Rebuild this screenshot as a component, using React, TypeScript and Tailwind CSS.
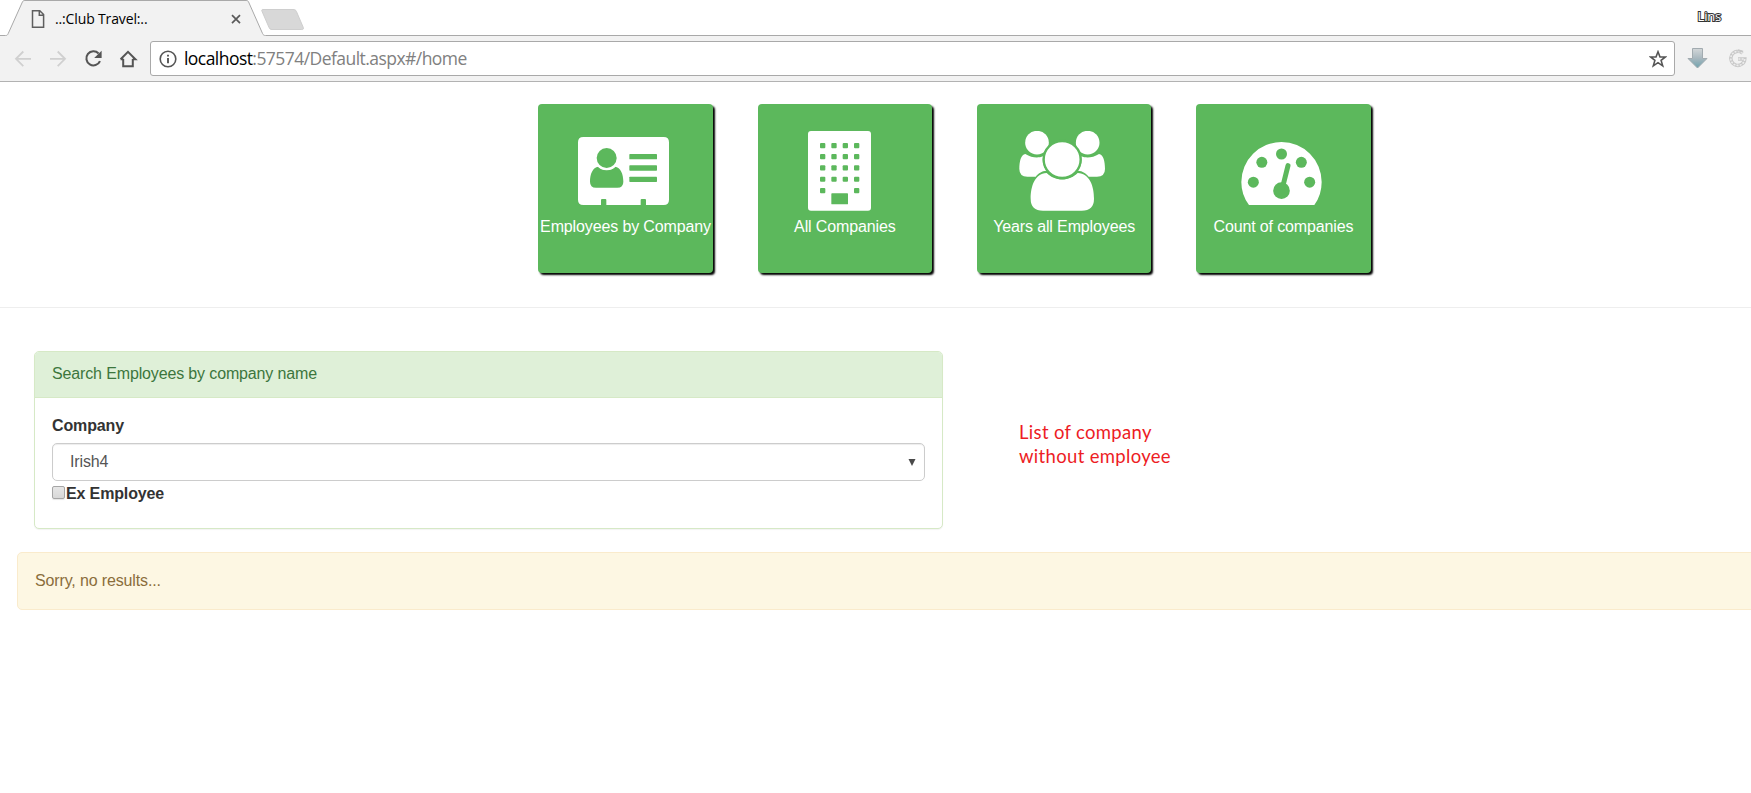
import type { ReactNode } from "react";

function TabStrip() {
  return (
    <div className="flex h-9 items-start bg-white">
      <div className="relative h-9 w-full">
        <svg className="absolute inset-0" width="1751" height="36" viewBox="0 0 1751 36" fill="none">
          <path d="M0 35.5H5.5C7 35.5 7.6 35 8.2 33.6L22.4 2C23 .8 23.6.5 25 .5H246C247.4.5 248 .8 248.6 2L262.6 33.6C263.2 35 264 35.5 265.5 35.5H1751V36H0Z" fill="#f2f2f2" />
          <path d="M0 35.5H5.5C7 35.5 7.6 35 8.2 33.6L22.4 2C23 .8 23.6.5 25 .5H246C247.4.5 248 .8 248.6 2L262.6 33.6C263.2 35 264 35.5 265.5 35.5H1751" stroke="#a9a9a9" />
          <path d="M263 9.5H293C295 9.5 295.8 10 296.4 11.4L303.2 27.3C303.8 29 303.4 29.5 301.8 29.5H272C270.3 29.5 269.7 29 269 27.4L262 11.3C261.5 10 261.7 9.5 263 9.5Z" fill="#d8d8d8" stroke="#cecece" />
          <path d="M32.5 10.7H39.8L43.6 14.6V27.2H32.5Z M39.3 10.7V15.2H43.6" stroke="#5f5f5f" strokeWidth="1.5" />
          <path d="M232 15.2L240 23.2M240 15.2L232 23.2" stroke="#5a5a5a" strokeWidth="1.7" />
        </svg>
        <div className="relative flex h-9 items-center justify-between pl-[55px] pr-[30px] font-['Open_Sans','Noto_Sans',sans-serif]">
          <span className="text-[14px] tracking-[-0.14px] text-black">..:Club Travel:..</span>
          <span className="-mt-[3px] text-[13px] leading-none tracking-[-0.2px] text-white [-webkit-text-stroke:2px_#333] [paint-order:stroke_fill]">
            Lins
          </span>
        </div>
      </div>
    </div>
  );
}

function Toolbar() {
  return (
    <div className="flex h-[46px] items-center border-b border-[#b2b2b2] bg-[#f2f2f2]">
      <svg width="150" height="45" viewBox="0 36 150 45" fill="none" className="shrink-0">
        <g stroke="#d0d0d0" strokeWidth="1.8">
          <path d="M31 58.8H16M23.3 51.5L16 58.8L23.3 66.1" />
          <path d="M50 58.8H65M57.7 51.5L65 58.8L57.7 66.1" />
        </g>
        <path d="M98.6 53.4A7.1 7.1 0 1 0 100 61.2" stroke="#555" strokeWidth="2.1" />
        <path d="M101.6 50.8V58H94.2Z" fill="#555" />
        <path d="M123.2 59V66.2H132.8V59M120.6 59.2L128 51.8L135.4 59.2H132.8M120.6 59.2H123.4" stroke="#555" strokeWidth="2" />
      </svg>
      <div className="flex h-[35px] w-[1525px] shrink-0 items-center justify-between rounded-[3px] border border-[#a9a9a9] bg-white pl-[8px] pr-[7px]">
        <div className="flex items-center gap-[7px]">
          <svg width="18" height="18" viewBox="0 0 18 18" fill="none">
            <circle cx="9" cy="9" r="7.8" stroke="#555" strokeWidth="1.6" />
            <path d="M9 8V13.2M9 4.8V6.6" stroke="#555" strokeWidth="1.9" />
          </svg>
          <span className="font-['Open_Sans','Noto_Sans',sans-serif] text-[17.500px] leading-none tracking-[-0.55px] text-[#808080]">
            <span className="text-black">localhost</span>:57574/Default.aspx#/home
          </span>
        </div>
        <svg width="18" height="18" viewBox="0 0 18 18" fill="none">
          <path d="M9 1.8L11 7H16.4L12.1 10.4L13.7 15.8L9 12.6L4.3 15.8L5.9 10.4L1.6 7H7Z" stroke="#555" strokeWidth="1.6" />
        </svg>
      </div>
      <svg width="76" height="45" viewBox="1675 36 76 45" fill="none" className="shrink-0">
        <defs>
          <linearGradient id="arrow" x1="0" y1="0" x2="0" y2="1">
            <stop offset="0" stopColor="#d3d7d9" />
            <stop offset=".5" stopColor="#a9b8bf" />
            <stop offset="1" stopColor="#6fa3ae" />
          </linearGradient>
        </defs>
        <path d="M1692.5 48.5H1702.5V58.5H1707L1697.5 68L1688 58.5H1692.5Z" fill="url(#arrow)" stroke="#a2abb0" />
        <path d="M1742.5 53.2A7 7 0 1 0 1744.8 59H1738" stroke="#c8c8c8" strokeWidth="3.4" />
        <path d="M1742.5 53.2A7 7 0 1 0 1744.8 59H1738" stroke="#ededed" strokeWidth="1.6" strokeDasharray="2 1.2" />
        <path d="M1738 50.2L1743 51.6" stroke="#c8c8c8" strokeWidth="2" />
      </svg>
    </div>
  );
}

const green = "#5cb85c";

const cardIcon = (
  <svg className="h-20 w-[175px]" viewBox="24 108 525 240">
    <path d="M160 126H401Q417 126 417 142V314Q417 330 401 330H348V315Q348 312 345 312H335Q332 312 332 315V330H229V315Q229 312 226 312H216Q213 312 213 315V330H160Q144 330 144 314V142Q144 126 160 126Z" fill="#fff" />
    <g fill={green}>
      <circle cx="230" cy="189" r="30" />
      <path d="M205 215C217 228 243 228 255 215C272 216 280 238 280 260Q280 278 262 278H198Q180 278 180 260C180 238 188 216 205 215Z" />
      <rect x="298" y="177" width="83" height="16" rx="2" />
      <rect x="298" y="211" width="83" height="16" rx="2" />
      <rect x="298" y="245" width="83" height="16" rx="2" />
    </g>
    <path d="M204 212C217 227 243 227 256 212" fill="none" stroke="#fff" strokeWidth="5" />
  </svg>
);

const windowColumns = [211, 245, 279, 313];
const windowRows = [144, 177, 211, 245, 279];

const buildingIcon = (
  <svg className="h-20 w-[175px]" viewBox="22 108 525 240">
    <rect x="175" y="108" width="189" height="239" rx="9" fill="#fff" />
    <g fill={green}>
      {windowRows.map((y) =>
        windowColumns
          .filter((x) => y !== 279 || x === 211 || x === 313)
          .map((x) => <rect key={`${x}-${y}`} x={x} y={y} width="16" height="15.5" rx="3" />)
      )}
      <rect x="245" y="295" width="50" height="33" rx="2" />
    </g>
  </svg>
);

const groupIcon = (
  <svg className="h-20 w-[175px]" viewBox="21 108 525 240">
    <g fill="#fff">
      <circle cx="201" cy="143" r="35.5" />
      <circle cx="353" cy="143" r="35.5" />
      <path d="M166 177C185 189 205 190 219 184C216 202 221 216 230 227C214 228 205 235 197 245H172Q148 245 148 222C148 200 153 178 166 177Z" />
      <path d="M387 177C368 189 348 190 334 184C337 202 332 216 323 227C339 228 348 235 356 245H381Q405 245 405 222C405 200 400 178 387 177Z" />
      <path d="M230 234C255 260 298 260 323 234C360 236 372 274 372 311Q372 347 335 347H219Q182 347 182 311C182 274 194 236 230 234Z" />
    </g>
    <circle cx="276.500" cy="193.500" r="55.500" fill="#fff" stroke={green} strokeWidth="7" />
  </svg>
);

const gaugeIcon = (
  <svg className="h-20 w-[175px]" viewBox="18 108 525 240">
    <path d="M177 330Q154 300 154 261A120.500 120 0 0 1 395 261Q395 300 373 330Z" fill="#fff" />
    <g fill={green}>
      <circle cx="190" cy="261.500" r="16.500" />
      <circle cx="215.500" cy="202" r="16.500" />
      <circle cx="274.500" cy="177" r="16.500" />
      <circle cx="334" cy="202" r="16.500" />
      <circle cx="359" cy="261.500" r="16.500" />
      <circle cx="274.500" cy="287" r="25" />
    </g>
    <path d="M278 276L294 212" stroke={green} strokeWidth="15" strokeLinecap="round" />
  </svg>
);

function Tile({ icon, label }: { icon: ReactNode; label: string }) {
  return (
    <button className="flex h-[169px] w-[174.660px] flex-col items-center overflow-visible rounded-[4px] bg-[#5cb85c] pt-[27px] text-white shadow-[2px_2px_2px_#000]">
      {icon}
      <span className="mt-[5px] whitespace-nowrap text-[16px] leading-[22px] tracking-[-0.13px]">{label}</span>
    </button>
  );
}

export default function App() {
  return (
    <div className="flex h-[793px] w-[1751px] flex-col overflow-hidden bg-white">
      <TabStrip />
      <Toolbar />
      <main className="flex flex-col font-['Liberation_Sans',Arial,sans-serif] text-[16px] leading-[22px] tracking-[-0.14px] text-[#333]">
        <nav className="flex h-[226px] gap-[44.670px] border-b border-[#eee] pl-[538.200px] pt-[22px]">
          <Tile icon={cardIcon} label="Employees by Company" />
          <Tile icon={buildingIcon} label="All Companies" />
          <Tile icon={groupIcon} label="Years all Employees" />
          <Tile icon={gaugeIcon} label="Count of companies" />
        </nav>
        <div className="flex items-start pl-[34px] pt-[43px]">
          <section className="h-[178px] w-[909px] rounded-[5px] border border-[#d6e9c6] bg-white shadow-[0_1px_1px_rgba(0,0,0,0.05)]">
            <h2 className="h-[46px] rounded-t-[4px] border-b border-[#d6e9c6] bg-[#dff0d8] pl-[17px] pt-[11px] text-[#3c763d]">
              Search Employees by company name
            </h2>
            <div className="flex flex-col px-[17px] pt-[17px]">
              <label className="font-bold">Company</label>
              <div className="mt-[6px] flex h-[38px] items-center justify-between rounded-[5px] border border-[#ccc] pl-[17px] pr-[8px] text-[#555] shadow-[inset_0_1px_1px_rgba(0,0,0,0.075)]">
                <span>Irish4</span>
                <svg width="8" height="8" viewBox="0 0 8 8">
                  <path d="M.5 1H7.500L4 8Z" fill="#4a4a4a" />
                </svg>
              </div>
              <label className="mt-[2px] flex items-center gap-px font-bold">
                <span className="-mt-[3px] size-[13px] rounded-[2px] border border-[#a5a5a5] bg-linear-to-b from-[#e6e6e6] to-[#d8d8d8] shadow-[0_1px_1px_rgba(0,0,0,0.1)]" />
                Ex Employee
              </label>
            </div>
          </section>
          <p className="ml-[76px] mt-[69px] w-[160px] font-[Lato,'Open_Sans',sans-serif] text-[18.500px] leading-6 tracking-[0.32px] text-[#ed1c24]">
            List of company without employee
          </p>
        </div>
        <div className="ml-[17px] mt-[23px] h-[58px] w-[1760px] rounded-[5px] border border-[#faebcc] bg-[#fdf7e3] pl-[17px] pt-[17px] text-[#8a6d3b]">
          Sorry, no results...
        </div>
      </main>
    </div>
  );
}
